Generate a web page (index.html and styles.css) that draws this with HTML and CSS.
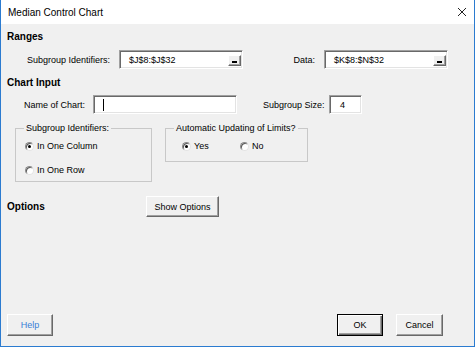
FILE: index.html
```html
<!DOCTYPE html>
<html>
<head>
<meta charset="utf-8">
<link rel="stylesheet" href="styles.css">
</head>
<body>
<div class="window">
  <div class="titlebar">
    <span class="title">Median Control Chart</span>
    <svg class="close" width="10" height="10" viewBox="0 0 10 10"><path d="M1 1L9 9M9 1L1 9" stroke="#222" stroke-width="1" fill="none"/></svg>
  </div>
  <div class="content">
    <div class="heading h-ranges">Ranges</div>
    <div class="row row-ranges">
      <span class="lbl lbl-sgid">Subgroup Identifiers:</span>
      <div class="field field-ref"><span class="val">$J$8:$J$32</span><span class="refbtn"><span class="bar"></span></span></div>
      <span class="lbl lbl-data">Data:</span>
      <div class="field field-ref"><span class="val">$K$8:$N$32</span><span class="refbtn"><span class="bar"></span></span></div>
    </div>
    <div class="heading h-chart">Chart Input</div>
    <div class="row row-chart">
      <span class="lbl lbl-name">Name of Chart:</span>
      <div class="field field-name"><span class="caret"></span></div>
      <span class="lbl lbl-size">Subgroup Size:</span>
      <div class="field field-size"><span class="val">4</span></div>
    </div>
    <div class="groups">
      <fieldset class="group group-ids">
        <legend>Subgroup Identifiers:</legend>
        <div class="radio checked r-col"><span class="dot"></span><span>In One Column</span></div>
        <div class="radio r-row"><span class="dot"></span><span>In One Row</span></div>
      </fieldset>
      <fieldset class="group group-auto">
        <legend>Automatic Updating of Limits?</legend>
        <div class="radio-line">
          <div class="radio checked r-yes"><span class="dot"></span><span>Yes</span></div>
          <div class="radio r-no"><span class="dot"></span><span>No</span></div>
        </div>
      </fieldset>
    </div>
    <div class="row row-options">
      <span class="heading lbl-options">Options</span>
      <div class="btn btn-show">Show Options</div>
    </div>
    <div class="footer">
      <div class="btn btn-help">Help</div>
      <div class="btn btn-ok">OK</div>
      <div class="btn btn-cancel">Cancel</div>
    </div>
  </div>
</div>
</body>
</html>
```
FILE: styles.css
```css
html, body {
  margin: 0;
  padding: 0;
}
body {
  font-family: "Liberation Sans", Arial, sans-serif;
  font-size: 9px;
  color: #000;
  background: #f0f0f0;
}
.window {
  box-sizing: border-box;
  width: 475px;
  height: 347px;
  border-left: 1px solid #2b7bd0;
  border-right: 1px solid #2b7bd0;
  border-bottom: 1px solid #2b7bd0;
  background: #f0f0f0;
  display: flex;
  flex-direction: column;
}
.titlebar {
  height: 24px;
  background: #fff;
  display: flex;
  align-items: center;
  padding-left: 7px;
  padding-right: 7px;
}
.title {
  font-size: 10px;
  flex: 1;
  margin-top: 1px;
}
.close {
  display: block;
}
.content {
  flex: 1;
  display: flex;
  flex-direction: column;
  padding: 0 6px;
}
.heading {
  font-weight: bold;
  font-size: 10px;
  line-height: 14px;
  height: 14px;
}
.h-ranges { margin-top: 6px; }
.h-chart { margin-top: 7px; }
.row {
  display: flex;
  align-items: center;
}
.row-ranges, .row-chart {
  height: 19px;
}
.row-ranges { margin-top: 6px; }
.row-chart { margin-top: 5px; }
.lbl {
  box-sizing: border-box;
  display: block;
  white-space: nowrap;
}
.lbl-sgid { width: 112px; padding-left: 20px; }
.lbl-data { width: 81px; text-align: right; padding-right: 9px; }
.lbl-name { width: 86px; padding-left: 17px; }
.lbl-size { width: 92px; padding-left: 26px; }
.field {
  box-sizing: border-box;
  height: 19px;
  background: #fff;
  border: 1px solid;
  border-color: #a0a0a0 #ffffff #ffffff #a0a0a0;
  box-shadow: inset 1px 1px 0 #696969, inset -1px -1px 0 #e3e3e3;
  display: flex;
  align-items: center;
}
.field-ref { width: 124px; }
.field-name { width: 144px; }
.field-size { width: 33px; }
.val {
  padding-left: 9px;
  white-space: nowrap;
}
.field-size .val { padding-left: 10px; }
.caret {
  display: block;
  width: 1px;
  height: 12px;
  background: #000;
  margin-left: 9px;
}
.refbtn {
  box-sizing: border-box;
  margin-left: auto;
  margin-right: 1px;
  margin-top: 2px;
  width: 13px;
  height: 11px;
  background: #f0f0f0;
  border: 1px solid;
  border-color: #ffffff #696969 #696969 #ffffff;
  box-shadow: inset -1px -1px 0 #a0a0a0;
  display: flex;
  align-items: flex-end;
  justify-content: center;
  padding-bottom: 2px;
}
.bar {
  display: block;
  width: 5px;
  height: 2px;
  background: #000;
}
.groups {
  display: flex;
  align-items: flex-start;
  margin-top: 8px;
}
.group {
  box-sizing: border-box;
  margin: 0;
  border: 1px solid #c8c8c8;
  padding: 0 0 0 8px;
}
.group legend {
  padding: 0 2px;
  line-height: 12px;
  font-size: 9px;
}
.group-ids {
  margin-left: 8px;
  width: 137px;
  height: 60px;
}
.group-auto {
  margin-left: 13px;
  width: 143px;
  height: 40px;
}
.radio {
  display: flex;
  align-items: center;
  height: 14px;
  white-space: nowrap;
}
.radio .dot {
  box-sizing: border-box;
  display: flex;
  align-items: center;
  justify-content: center;
  width: 9px;
  height: 9px;
  border-radius: 50%;
  background: #fff;
  border: 1px solid;
  border-color: #8a8a8a #e4e4e4 #e4e4e4 #8a8a8a;
  box-shadow: inset 1px 1px 0 #5a5a5a;
  margin-right: 3px;
}
.radio.checked .dot::after {
  content: "";
  display: block;
  width: 3px;
  height: 3px;
  border-radius: 50%;
  background: #000;
}
.r-col { margin-top: 5px; margin-left: 1px; }
.r-row { margin-top: 10px; margin-left: 1px; }
.radio-line {
  display: flex;
  margin-top: 5px;
}
.r-yes { margin-left: 8px; width: 58px; }
.btn {
  box-sizing: border-box;
  display: flex;
  align-items: center;
  justify-content: center;
  height: 22px;
  background: #f0f0f0;
  border: 1px solid;
  border-color: #ffffff #696969 #696969 #ffffff;
  box-shadow: inset -1px -1px 0 #a0a0a0;
  white-space: nowrap;
}
.row-options {
  margin-top: 14px;
  height: 21px;
}
.lbl-options {
  width: 139px;
  line-height: 21px;
  height: 21px;
}
.btn-show {
  width: 73px;
  height: 21px;
}
.footer {
  margin-top: auto;
  margin-bottom: 10px;
  display: flex;
  align-items: center;
  padding-right: 25px;
}
.btn-help {
  width: 46px;
  color: #3a7fd6;
  margin-right: auto;
}
.btn-ok {
  width: 46px;
  border: 1px solid #000;
  box-shadow: inset 1px 1px 0 #ffffff, inset -1px -1px 0 #696969, inset -2px -2px 0 #a0a0a0;
  margin-right: 13px;
}
.btn-cancel {
  width: 47px;
}
```
